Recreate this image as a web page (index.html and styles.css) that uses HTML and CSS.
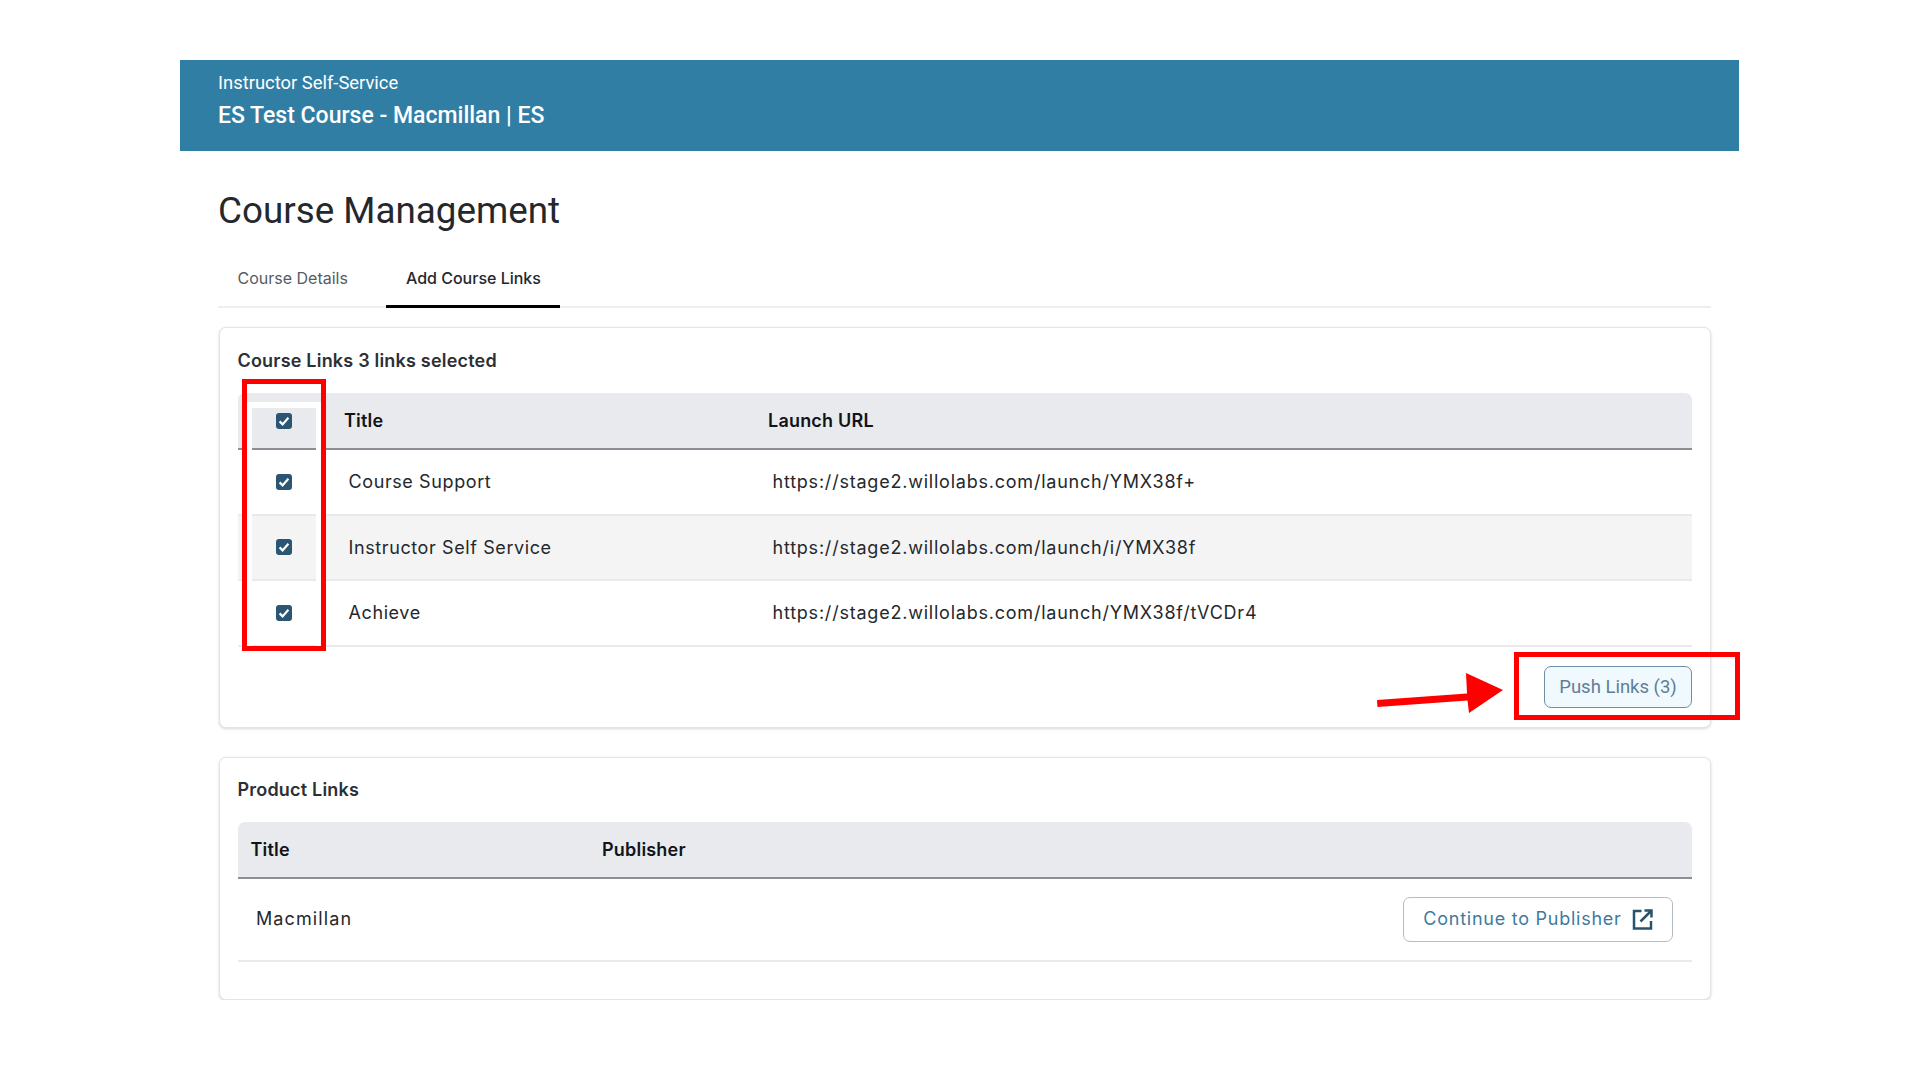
FILE: index.html
```html
<!DOCTYPE html>
<html lang="en">
<head>
<meta charset="utf-8">
<title>Course Management</title>
<link rel="stylesheet" href="styles.css">
</head>
<body>
<div class="page">
  <header class="banner">
    <div class="banner-sub">Instructor Self-Service</div>
    <div class="banner-title">ES Test Course - Macmillan | ES</div>
  </header>
  <main class="main">
    <h1 class="page-title">Course Management</h1>
    <nav class="tabs">
      <a class="tab">Course Details</a>
      <a class="tab tab-active">Add Course Links</a>
    </nav>
    <section class="card card-links">
      <h2 class="card-title">Course Links 3 links selected</h2>
      <table class="grid">
        <colgroup><col class="col-check"><col class="col-title"><col></colgroup>
        <thead>
          <tr>
            <th class="check-th"><div class="check-gutter"><div class="check-cell check-head"><span class="box"><svg viewBox="0 0 16 16"><path d="M3.600 8.400l3 3 5.800-6.600"/></svg></span></div></div></th>
            <th>Title</th>
            <th>Launch URL</th>
          </tr>
        </thead>
        <tbody>
          <tr>
            <td class="check-td"><div class="check-gutter"><div class="check-cell"><span class="box"><svg viewBox="0 0 16 16"><path d="M3.600 8.400l3 3 5.800-6.600"/></svg></span></div></div></td>
            <td>Course Support</td>
            <td class="url">https://stage2.willolabs.com/launch/YMX38f+</td>
          </tr>
          <tr class="alt">
            <td class="check-td"><div class="check-gutter"><div class="check-cell"><span class="box"><svg viewBox="0 0 16 16"><path d="M3.600 8.400l3 3 5.800-6.600"/></svg></span></div></div></td>
            <td>Instructor Self Service</td>
            <td class="url">https://stage2.willolabs.com/launch/i/YMX38f</td>
          </tr>
          <tr>
            <td class="check-td"><div class="check-gutter"><div class="check-cell"><span class="box"><svg viewBox="0 0 16 16"><path d="M3.600 8.400l3 3 5.800-6.600"/></svg></span></div></div></td>
            <td>Achieve</td>
            <td class="url">https://stage2.willolabs.com/launch/YMX38f/tVCDr4</td>
          </tr>
        </tbody>
      </table>
      <div class="actions"><button class="btn-push">Push Links (3)</button></div>
      <div class="mark mark-col"></div>
      <div class="mark mark-btn"></div>
      <svg class="arrow" viewBox="0 0 130 42"><polygon points="0,27 90,20.500 89,0 126,17 92,40 90.500,27.500 0.500,34"/></svg>
    </section>
    <section class="card card-product">
      <h2 class="card-title">Product Links</h2>
      <table class="grid">
        <colgroup><col class="col-pub"><col></colgroup>
        <thead>
          <tr><th>Title</th><th>Publisher</th></tr>
        </thead>
        <tbody>
          <tr class="pub-row">
            <td class="pub-name">Macmillan</td>
            <td class="pub-action">
              <button class="btn-continue"><span class="btn-label">Continue to Publisher</span>
                <svg class="ext" viewBox="0 0 21 21"><path d="M9.500 2H2v17.500h17V12"/><path d="M12.500 1.500h7v7M19 2L8.500 12.500"/></svg>
              </button>
            </td>
          </tr>
        </tbody>
      </table>
    </section>
  </main>
</div>
</body>
</html>
```

FILE: styles.css
```css
* { box-sizing: border-box; }
html, body { margin: 0; padding: 0; background: #fff; }
body { font-family: Roboto, "Liberation Sans", sans-serif; color: #24282d; overflow: hidden; }
.page { margin: 60px 181px 0 180px; }
.banner { height: 91px; background: #317ea4; color: #fff; padding: 12px 38px 0; }
.banner-sub { font-size: 18.400px; line-height: 22px; }
.banner-title { font-size: 23px; font-weight: 500; line-height: 28px; margin-top: 8px; }
.main { padding: 0 28px 0 38px; }
.page-title { margin: 38px 0 0; font-size: 36.800px; font-weight: 400; line-height: 44px; color: #24282d; }
.tabs { display: flex; margin-top: 24px; height: 51px; border-bottom: 2px solid #eceef0; }
.tab { height: 51px; padding: 11px 19.500px 0; font-family: Inter, sans-serif; font-size: 16px; line-height: 20px; color: #555c63; border-bottom: 3px solid transparent; }
.tab + .tab { margin-left: 19px; }
.tab-active { color: #24282d; font-weight: 500; border-bottom-color: #000; }
.card { position: relative; background: #fff; border: 1px solid #e3e4e6; border-radius: 7px; box-shadow: 0 1px 3px rgba(0,0,0,.16); padding: 19px 18px 0; margin-left: .5px; }
.card-links { margin-top: 19px; height: 401px; }
.card-product { margin-top: 29px; height: 243px; padding-top: 18px; }
.card-title { margin: 0; font-family: Inter, sans-serif; font-size: 18px; font-weight: 600; line-height: 27px; color: #2b3036; letter-spacing: .2px; }
.grid { width: 100%; border-collapse: separate; border-spacing: 0; table-layout: fixed; margin-top: 19px; font-family: Inter, sans-serif; font-size: 18px; color: #24282d; letter-spacing: .6px; }
.col-check { width: 92.500px; }
.col-title { width: 424px; }
.col-pub { width: 350.500px; }
.grid th { height: 57px; padding: 0 14px; background: #e9eaee; border-bottom: 2px solid #8b8e95; font-weight: 600; text-align: left; color: #111418; letter-spacing: .2px; }
.grid th:first-child { border-top-left-radius: 7px; }
.grid th:last-child { border-top-right-radius: 7px; }
.card-product .grid th:first-child { padding-left: 13px; }
.grid td { height: 65.500px; padding: 0 18.500px; border-bottom: 2px solid #e8eaef; }
.grid .url { letter-spacing: .78px; }
.grid .alt td { background: #f4f4f5; }
.grid th.check-th { padding: 0; vertical-align: top; border-bottom: 0; box-shadow: inset 0 -2px 0 #8b8e95; }
.grid td.check-td { padding: 0; vertical-align: top; }
.check-gutter { background: #fff; width: 74px; margin: 0 auto; padding: 0 5px; }
.check-th .check-gutter { margin-top: 9px; height: 48px; padding-top: 6px; }
.check-td .check-gutter { height: 65.500px; margin-bottom: -2px; }
.check-cell { height: 100%; display: flex; align-items: center; justify-content: center; }
.check-head { height: 42px; padding-bottom: 15px; background: #e9eaee; border-bottom: 2px solid #8b8e95; }
.alt .check-cell { background: #f4f4f5; }
.check-td .check-cell { border-bottom: 2px solid #e8eaef; }
.box { width: 16px; height: 16px; background: #2a5573; border-radius: 3px; display: block; }
.box svg { display: block; width: 16px; height: 16px; fill: none; stroke: #fff; stroke-width: 2.200; }
.actions { display: flex; justify-content: flex-end; margin-top: 19px; }
.btn-push { width: 148px; height: 42px; background: #eff9fe; border: 1px solid #6f8fa5; border-radius: 7px; font-family: Roboto, sans-serif; font-size: 18.500px; color: #5f7f96; padding: 0; }
.mark { position: absolute; border: 5px solid #ff0000; pointer-events: none; }
.mark-col { left: 22px; top: 51px; width: 84px; height: 272px; }
.mark-btn { left: 1294px; top: 324px; width: 226px; height: 68px; }
.arrow { position: absolute; left: 1157px; top: 345px; width: 130px; height: 42px; fill: #ff0000; }
.grid .pub-row td { height: 83px; }
.grid .pub-name { letter-spacing: 1.100px; padding-bottom: 2px; }
.pub-action { text-align: right; }
.grid .pub-action { padding-right: 19px; }
.btn-continue { display: inline-flex; align-items: center; justify-content: center; gap: 10px; width: 270px; height: 45px; background: #fff; border: 1px solid #b4bcc4; border-radius: 7px; font-family: Inter, sans-serif; font-size: 18px; letter-spacing: .75px; color: #3f7a9e; padding: 0; }
.btn-label { margin-bottom: 2px; }
.ext { width: 21px; height: 21px; fill: none; stroke: #28536f; stroke-width: 2.500; flex: none; }
```
